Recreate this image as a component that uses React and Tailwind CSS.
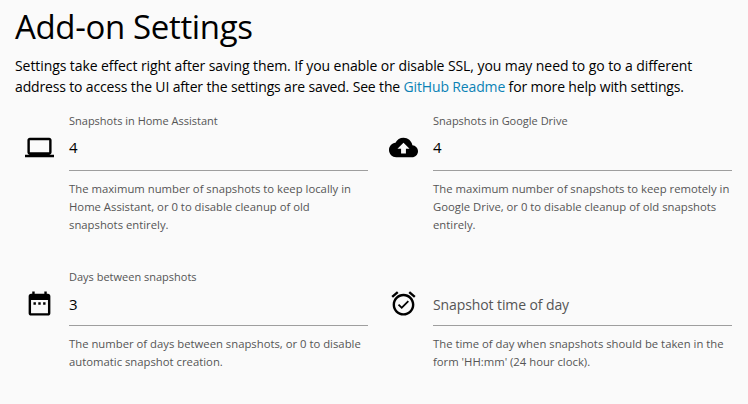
import React from 'react'

const icons = {
  laptop: 'M20 18c1.1 0 1.99-.9 1.99-2L22 6c0-1.1-.9-2-2-2H4c-1.1 0-2 .9-2 2v10c0 1.1.9 2 2 2H0v2h24v-2h-4zM4 6h16v10H4V6z',
  cloud: 'M19.35 10.04C18.67 6.59 15.64 4 12 4 9.11 4 6.6 5.64 5.35 8.04 2.34 8.36 0 10.91 0 14c0 3.31 2.69 6 6 6h13c2.76 0 5-2.24 5-5 0-2.64-2.05-4.78-4.65-4.96zM14 13v4h-4v-4H7l5-5 5 5h-3z',
  calendar: 'M9 11H7v2h2v-2zm4 0h-2v2h2v-2zm4 0h-2v2h2v-2zm2-7h-1V2h-2v2H8V2H6v2H5c-1.11 0-1.99.9-1.99 2L3 20c0 1.1.89 2 2 2h14c1.1 0 2-.9 2-2V6c0-1.1-.9-2-2-2zm0 16H5V9h14v11z',
  alarm: 'M22 5.72l-4.6-3.86-1.29 1.53 4.6 3.86L22 5.72zM7.88 3.39L6.6 1.86 2 5.71l1.29 1.53 4.59-3.85zM12 4c-4.97 0-9 4.03-9 9s4.02 9 9 9c4.97 0 9-4.03 9-9s-4.03-9-9-9zm0 16c-3.87 0-7-3.13-7-7s3.13-7 7-7 7 3.13 7 7-3.13 7-7 7zm-1.46-5.47L8.41 12.4l-1.06 1.06 3.18 3.18 6-6-1.06-1.06-4.93 4.95z',
}

const Field = ({ icon, label, value, placeholder, help, inputClass }) => (
  <div className="flex">
    <div className="w-[44px] shrink-0 pt-[21px]">
      <svg viewBox="0 0 24 24" className="h-[29px] w-[29px] fill-black">
        <path d={icons[icon]} />
      </svg>
    </div>
    <div className="w-[299px]">
      <div className="h-[18px] text-[11px] leading-[18px] text-[#555]">{label || '\u00a0'}</div>
      <div className={`flex items-center border-b border-[#9e9e9e] ${inputClass}`}>
        {placeholder ? (
          <span className="text-[14px] tracking-[-0.1px] text-[#555]">{placeholder}</span>
        ) : (
          <span className="text-[15px] text-black">{value}</span>
        )}
      </div>
      <p className="mt-[9px] text-[11.3px] leading-[18px] text-[#555]">{help}</p>
    </div>
  </div>
)

export default function App() {
  return (
    <div className="h-[404px] overflow-hidden bg-[#fafafa] font-['Open_Sans',sans-serif]">
      <div className="px-[15px]">
        <h1 className="pt-[5px] text-[33px] leading-[44px] tracking-[-0.35px] text-black">Add-on Settings</h1>
        <p className="mt-[6px] text-[14px] leading-[21px] text-black">
          <span className="block tracking-[-0.08px]">
            Settings take effect right after saving them. If you enable or disable SSL, you may need to go to a different
          </span>
          <span className="block tracking-[-0.15px]">
            address to access the UI after the settings are saved. See the{' '}
            <a className="text-[#0b82b5]">GitHub Readme</a> for more help with settings.
          </span>
        </p>
      </div>
      <div className="mt-[15px] grid grid-cols-[364px_1fr] pl-[25px]">
        <div className="h-[156px]">
          <Field
            icon="laptop"
            label="Snapshots in Home Assistant"
            value="4"
            inputClass="h-[41px] pb-[5px]"
            help={<>The maximum number of snapshots to keep locally in<br />Home Assistant, or 0 to disable cleanup of old<br />snapshots entirely.</>}
          />
        </div>
        <div className="h-[156px]">
          <Field
            icon="cloud"
            label="Snapshots in Google Drive"
            value="4"
            inputClass="h-[41px] pb-[5px]"
            help={<>The maximum number of snapshots to keep remotely in<br />Google Drive, or 0 to disable cleanup of old snapshots<br />entirely.</>}
          />
        </div>
        <Field
          icon="calendar"
          label="Days between snapshots"
          value="3"
          inputClass="h-[40px] pb-[2px]"
          help={<>The number of days between snapshots, or 0 to disable<br />automatic snapshot creation.</>}
        />
        <Field
          icon="alarm"
          placeholder="Snapshot time of day"
          inputClass="h-[40px] pb-[2px]"
          help={<>The time of day when snapshots should be taken in the<br />form 'HH:mm' (24 hour clock).</>}
        />
      </div>
    </div>
  )
}
